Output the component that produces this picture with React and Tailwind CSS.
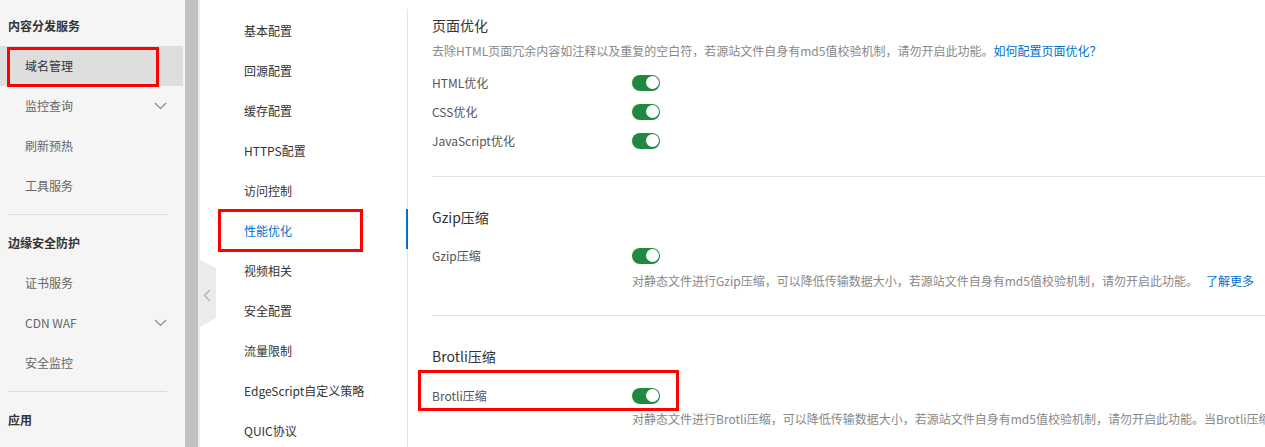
const sideGroups = [
  {
    title: "内容分发服务",
    items: [
      { label: "域名管理", active: true },
      { label: "监控查询", caret: true },
      { label: "刷新预热" },
      { label: "工具服务" },
    ],
  },
  {
    title: "边缘安全防护",
    items: [
      { label: "证书服务" },
      { label: "CDN WAF", caret: true },
      { label: "安全监控" },
    ],
  },
  { title: "应用", items: [] },
];

const navItems = [
  "基本配置",
  "回源配置",
  "缓存配置",
  "HTTPS配置",
  "访问控制",
  "性能优化",
  "视频相关",
  "安全配置",
  "流量限制",
  "EdgeScript自定义策略",
  "QUIC协议",
];

const Caret = () => (
  <svg width="13" height="8" viewBox="0 0 13 8" fill="none">
    <polyline points="1,1 6.5,6.5 12,1" stroke="#8a8a8a" strokeWidth="1.2" />
  </svg>
);

const Toggle = () => (
  <div className="flex h-4 w-7 items-center justify-end rounded-full bg-[#1f8a3f] pr-[1.5px]">
    <div className="size-[13px] rounded-full bg-white"></div>
  </div>
);

const Row = ({ label, boxed }) => (
  <div className="relative flex h-[29px] items-center">
    <span className="w-[200px] text-[12px] text-[#555]">{label}</span>
    <Toggle />
    {boxed && (
      <div className="absolute top-[-11px] left-[-14px] h-[41px] w-[261px] border-[3px] border-[#ff0000]"></div>
    )}
  </div>
);

export default function App() {
  return (
    <div
      className="flex h-[447px] w-[1265px] overflow-hidden bg-white"
      style={{ fontFamily: '"Noto Sans CJK SC", "Noto Sans", sans-serif' }}
    >
      {/* barra lateral */}
      <aside className="w-[185px] shrink-0 bg-[#f5f5f5] pt-[6px]">
        {sideGroups.map((g, gi) => (
          <div key={g.title}>
            {gi > 0 && <div className="my-2 mr-[18px] ml-2 h-px bg-[#dcdcdc]"></div>}
            <div className="flex h-10 items-center pl-2 text-[12px] font-bold text-[#333]">
              {g.title}
            </div>
            {g.items.map((it) => (
              <div
                key={it.label}
                className={`relative flex h-10 w-[183px] items-center justify-between pr-4 pl-[25px] text-[12px] ${
                  it.active ? "bg-[#dedede] text-[#333]" : "text-[#666]"
                }`}
              >
                <span>{it.label}</span>
                {it.caret && <Caret />}
                {it.active && (
                  <div className="absolute top-px left-[7px] h-10 w-[152px] border-[3px] border-[#ff0000]"></div>
                )}
              </div>
            ))}
          </div>
        ))}
      </aside>
      <div className="w-[13px] shrink-0 bg-[#c1c1c1]"></div>
      <div className="w-[2px] shrink-0 bg-[#eeeeee]"></div>

      {/* menu de configuracion */}
      <nav className="relative mt-[9px] w-[208px] shrink-0 border-r border-[#e3e3e3] pt-[2px]">
        {navItems.map((n) => (
          <div
            key={n}
            className={`relative flex h-10 items-center pl-[44px] text-[12px] ${
              n === "性能优化" ? "text-[#0070cc]" : "text-[#333]"
            }`}
          >
            {n}
            {n === "性能优化" && (
              <>
                <span className="absolute top-[-2px] right-[-1px] h-10 w-[2px] bg-[#0070cc]"></span>
                <div className="absolute top-[-2px] left-[18px] h-[43px] w-[145px] border-[3px] border-[#ff0000]"></div>
              </>
            )}
          </div>
        ))}
        <svg className="absolute top-[251px] left-0" width="16" height="67" viewBox="0 0 16 67">
          <polygon points="0,0 16,8 16,58 0,67" fill="#ebebeb" />
          <polyline points="10,30 4.5,35.5 10,41" fill="none" stroke="#b0b0b0" strokeWidth="1.3" />
        </svg>
      </nav>

      {/* contenido */}
      <main className="min-w-0 flex-1 overflow-hidden pt-[15px] pl-6">
        <h3 className="text-[14px] leading-5 text-[#333]">页面优化</h3>
        <p className="mt-[7px] text-[12px] leading-[18px] whitespace-nowrap text-[#888]">
          去除HTML页面冗余内容如注释以及重复的空白符，若源站文件自身有md5值校验机制，请勿开启此功能。
          <span className="text-[#0070cc]">如何配置页面优化？</span>
        </p>
        <div className="mt-2">
          <Row label="HTML优化" />
          <Row label="CSS优化" />
          <Row label="JavaScript优化" />
        </div>

        <div className="mt-[21px] h-px bg-[#e3e3e3]"></div>

        <h3 className="mt-[30px] text-[14px] leading-5 text-[#333]">Gzip压缩</h3>
        <div className="mt-[14px]">
          <Row label="Gzip压缩" />
        </div>
        <p className="mt-[2px] pl-[200px] text-[12px] leading-[18px] whitespace-nowrap text-[#888]">
          对静态文件进行Gzip压缩，可以降低传输数据大小，若源站文件自身有md5值校验机制，请勿开启此功能。
          <span className="ml-2 text-[#0070cc]">了解更多</span>
        </p>

        <div className="mt-[25px] h-px bg-[#e3e3e3]"></div>

        <h3 className="mt-[30px] text-[14px] leading-5 text-[#333]">Brotli压缩</h3>
        <div className="mt-[15px]">
          <Row label="Brotli压缩" boxed />
        </div>
        <p className="pl-[200px] text-[12px] leading-[18px] whitespace-nowrap text-[#888]">
          对静态文件进行Brotli压缩，可以降低传输数据大小，若源站文件自身有md5值校验机制，请勿开启此功能。当Brotli压缩
        </p>
      </main>
    </div>
  );
}
